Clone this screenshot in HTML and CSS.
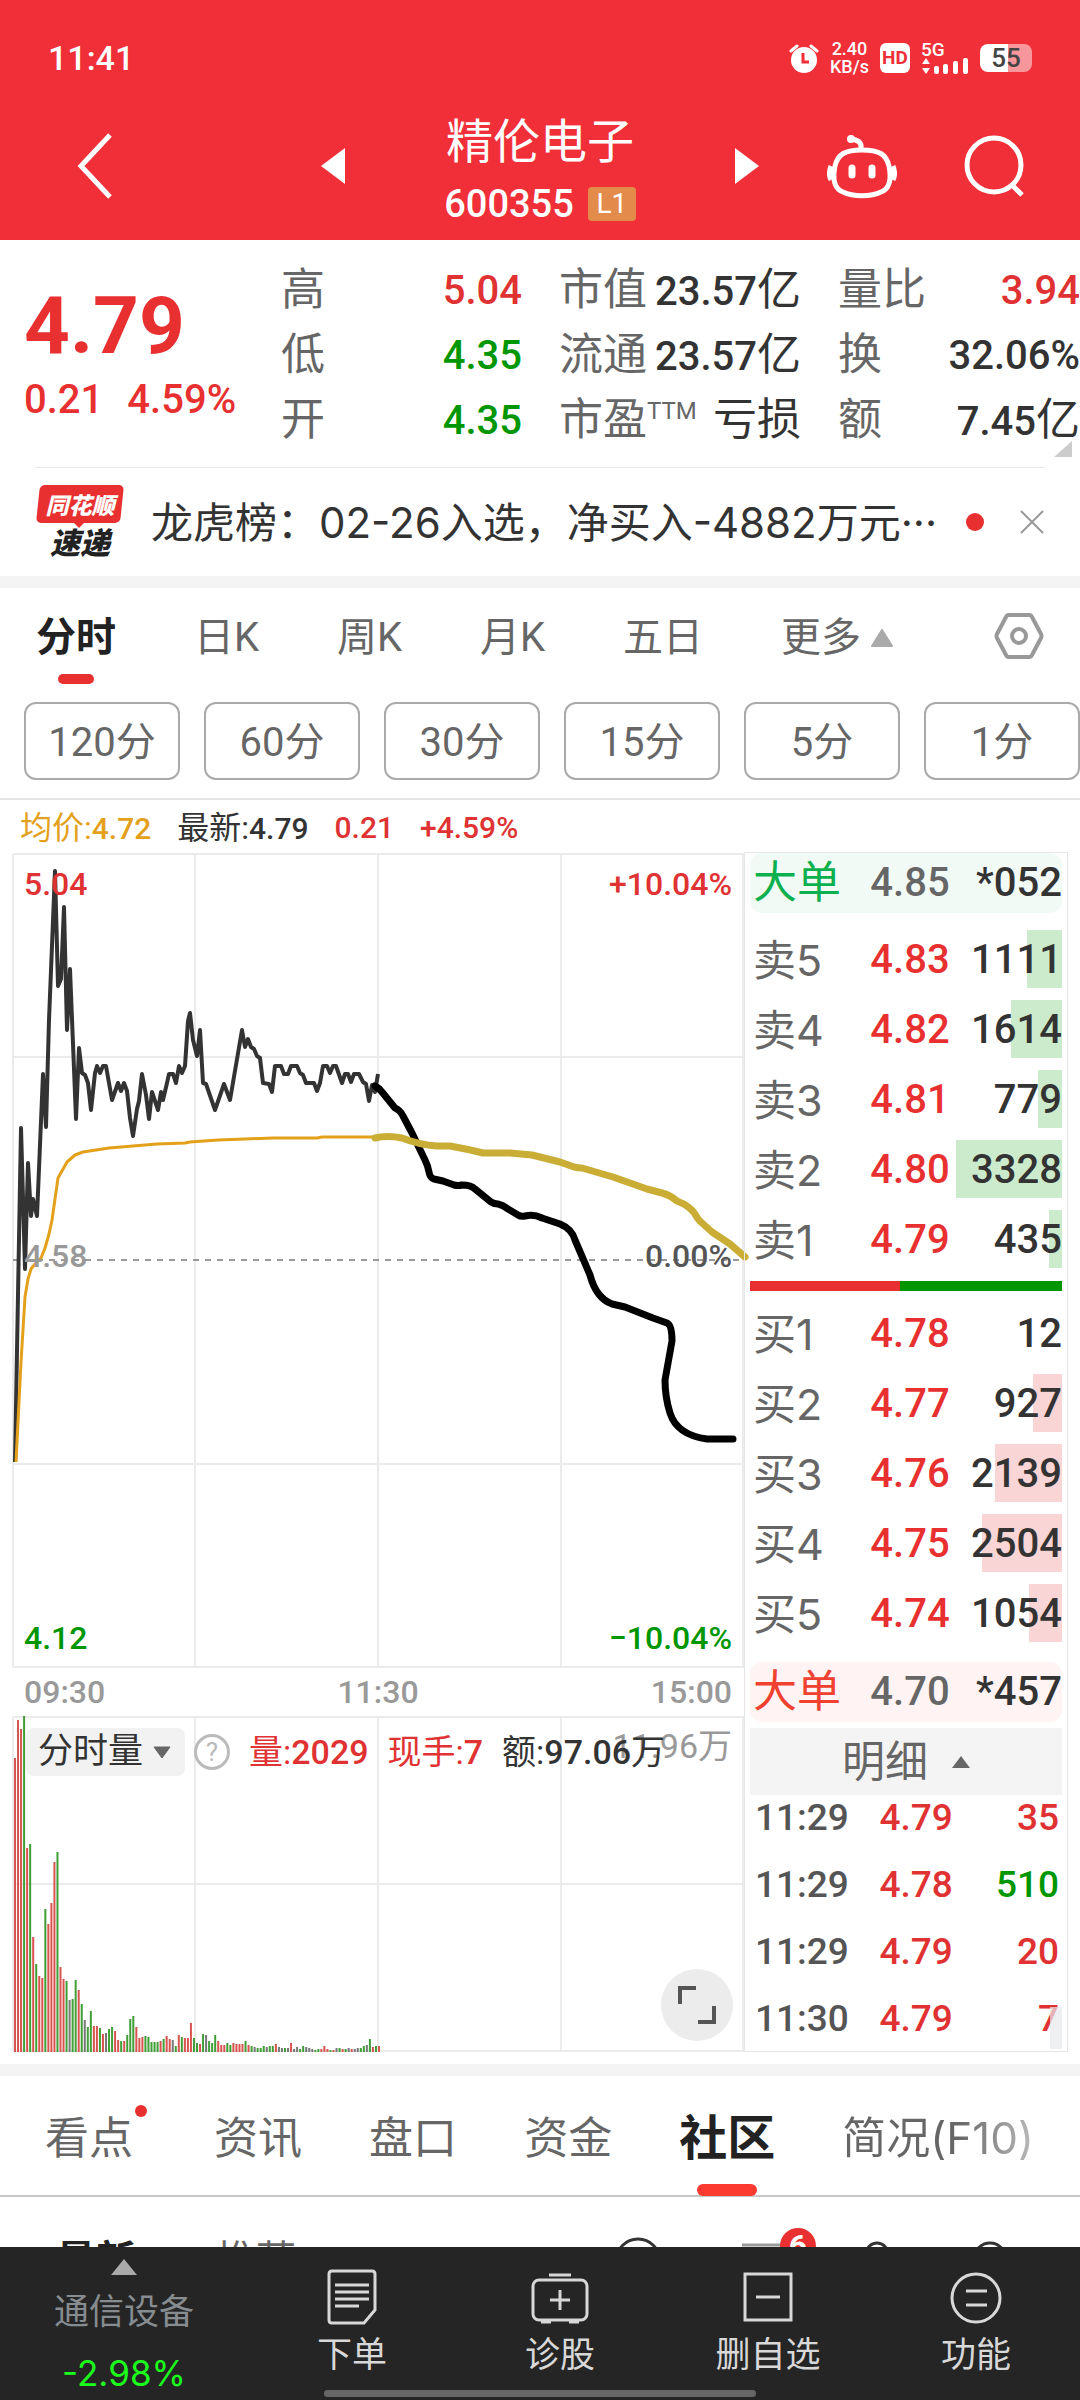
FILE: index.html
```html
<!DOCTYPE html>
<html lang="zh-CN">
  <head>
    <meta charset="UTF-8" />
    <meta name="viewport" content="width=device-width, initial-scale=1.0" />
    <title>精伦电子 600355</title>
    <link rel="stylesheet" href="styles.css">
  </head>
  <body>
    <header class="header">
      <div class="status">
        <span class="clock">11:41</span>
        <div class="status-icons">
          <svg width="30" height="30" viewBox="0 0 30 30">
            <circle cx="15" cy="17" r="13" fill="#fff" />
            <path d="M2 8 L8 3 M28 8 L22 3" stroke="#fff" stroke-width="3" stroke-linecap="round" />
            <path d="M14 10 V19 H20" fill="none" stroke="#f12f38" stroke-width="3" />
          </svg>
          <span class="speed"><span>2.40</span><span>KB/s</span></span>
          <span class="hd">HD</span>
          <div class="signal">
            <span>5G</span>
            <svg width="48" height="16" viewBox="0 0 48 16" fill="#fff">
              <path d="M1 6 L5 0 L9 6 Z M1 10 L5 16 L9 10 Z" />
              <rect x="13" y="8" width="5" height="8" rx="2" />
              <rect x="22" y="6" width="5" height="10" rx="2" />
              <rect x="32" y="3" width="5" height="13" rx="2" />
              <rect x="42" y="0" width="5" height="16" rx="2" />
            </svg>
          </div>
          <span class="battery">55</span>
        </div>
      </div>
      <nav class="nav">
        <div class="nav-left">
          <button class="icon-btn" aria-label="返回">
            <svg width="36" height="66" viewBox="0 0 36 66"><path d="M33 2 L4 33 L33 64" fill="none" stroke="#fff" stroke-width="5" /></svg>
          </button>
          <button class="icon-btn" aria-label="上一个">
            <svg width="24" height="36" viewBox="0 0 24 36"><path d="M24 0 L0 18 L24 36 Z" fill="#fff" /></svg>
          </button>
        </div>
        <div class="nav-title">
          <h1>精伦电子</h1>
          <div class="code">600355 <span class="level">L1</span></div>
        </div>
        <div class="nav-right">
          <button class="icon-btn" aria-label="下一个">
            <svg width="24" height="36" viewBox="0 0 24 36"><path d="M0 0 L24 18 L0 36 Z" fill="#fff" /></svg>
          </button>
          <button class="icon-btn" aria-label="智能助手">
            <svg width="70" height="66" viewBox="0 0 70 66" fill="none" stroke="#fff" stroke-width="5">
              <path d="M35 17 C52 17 59 21 62 33 C65 48 62 56 54 59 C44 64 26 64 16 59 C8 56 5 48 8 33 C11 21 18 17 35 17 Z" />
              <path d="M4 33 C2 38 2 43 4 47 M66 33 C68 38 68 43 66 47" />
              <path d="M34 16 C35 9 31 7 24 6" />
              <circle cx="24" cy="6" r="3" fill="#fff" stroke-width="2" />
              <path d="M25 35 V42 M45 35 V42" stroke-width="7" stroke-linecap="round" />
            </svg>
          </button>
          <button class="icon-btn" aria-label="搜索">
            <svg width="62" height="62" viewBox="0 0 62 62" fill="none" stroke="#fff" stroke-width="5">
              <circle cx="30" cy="30" r="27" />
              <path d="M48 50 L58 60" />
            </svg>
          </button>
        </div>
      </nav>
    </header>

    <section class="quote">
      <div class="price">
        <div class="price-now">4.79</div>
        <div class="price-diff"><span>0.21</span><span>4.59%</span></div>
      </div>
      <dl class="stats">
        <div><dt>高</dt><dd class="up">5.04</dd></div>
        <div><dt>低</dt><dd class="down">4.35</dd></div>
        <div><dt>开</dt><dd class="down">4.35</dd></div>
      </dl>
      <dl class="stats">
        <div><dt>市值</dt><dd>23.57<span>亿</span></dd></div>
        <div><dt>流通</dt><dd>23.57<span>亿</span></dd></div>
        <div><dt>市盈<sup>TTM</sup></dt><dd><span>亏损</span></dd></div>
      </dl>
      <dl class="stats stats-last">
        <div><dt>量比</dt><dd class="up">3.94</dd></div>
        <div><dt>换</dt><dd>32.06%</dd></div>
        <div><dt>额</dt><dd>7.45<span>亿</span></dd></div>
      </dl>
    </section>

    <section class="notice">
      <div class="notice-logo">
        <span class="logo-top">同花顺</span>
        <span class="logo-bottom">速递</span>
      </div>
      <a class="notice-text" href="#">龙虎榜：02-26入选，净买入-4882万元···</a>
      <span class="notice-dot"></span>
      <button class="icon-btn" aria-label="关闭">
        <svg width="24" height="24" viewBox="0 0 24 24"><path d="M1 1 L23 23 M23 1 L1 23" stroke="#999" stroke-width="2" /></svg>
      </button>
    </section>

    <section class="periods">
      <div class="period-row">
        <div class="period-tabs">
          <button class="active">分时</button>
          <button>日K</button>
          <button>周K</button>
          <button>月K</button>
          <button>五日</button>
          <button class="more">更多
            <svg width="24" height="20" viewBox="0 0 24 20"><path d="M12 2 L22 18 H2 Z" fill="#aaa" stroke="#aaa" stroke-width="2" stroke-linejoin="round" /></svg>
          </button>
        </div>
        <button class="icon-btn" aria-label="设置">
          <svg width="50" height="48" viewBox="0 0 50 48" fill="none" stroke="#999" stroke-width="4" stroke-linejoin="round">
            <path d="M14 3 H36 Q37 3 38 5 L47 22 Q48 24 47 26 L38 43 Q37 45 36 45 H14 Q13 45 12 43 L3 26 Q2 24 3 22 L12 5 Q13 3 14 3 Z" />
            <circle cx="25" cy="24" r="7" />
          </svg>
        </button>
      </div>
      <div class="minutes">
        <button>120分</button>
        <button>60分</button>
        <button>30分</button>
        <button>15分</button>
        <button>5分</button>
        <button>1分</button>
      </div>
    </section>

    <div class="chart-info">
      <span class="avg">均价:<b>4.72</b></span>
      <span>最新:<b>4.79</b></span>
      <b class="up">0.21</b>
      <b class="up">+4.59%</b>
    </div>

    <main class="trade">
      <div class="charts">
        <div class="price-chart">
          <svg viewBox="0 0 732 816" preserveAspectRatio="none" fill="none">
            <path d="M1 2 H732 M1 205 H732 M1 612 H732 M1 815 H732 M1 2 V815 M183 2 V815 M366 2 V815 M549 2 V815 M731 2 V815" stroke="#ebebeb" stroke-width="2" />
            <path d="M1 408 H732" stroke="#999" stroke-width="2" stroke-dasharray="6 6" />
            <polyline stroke="#333" stroke-width="4" stroke-linejoin="round" points="3,610 9,276 13,417 16,311 19,364 21,347 25,364 31,222 34,275 37,168 43,19 46,134 49,127 52,55 55,178 58,117 64,267 67,196 70,221 73,223 76,231 79,258 83,221 85,214 88,221 91,214 94,214 100,248 106,231 109,239 112,231 115,239 118,266 121,284 125,257 127,249 130,222 134,243 137,267 140,240 146,258 149,240 151,248 155,231 157,222 161,222 164,231 167,214 170,221 173,214 176,169 178,161 181,188 185,204 188,178 191,231 194,232 203,258 212,232 218,248 230,178 233,195 236,187 239,195 242,197 245,204 248,206 251,231 257,232 260,240 263,214 269,214 272,222 276,222 279,214 285,214 288,221 291,223 294,231 302,231 305,239 308,231 311,214 315,214 318,221 321,214 324,214 330,231 333,222 336,222 339,230 342,222 347,222 351,230 354,232 357,249 360,233 363,240 366,222" />
            <polyline stroke="#e3a01b" stroke-width="3" stroke-linejoin="round" points="4,610 9,510 13,445 16,427 19,417 23,412 29,406 33,396 37,382 40,368 43,347 46,326 55,310 63,303 71,300 97,296 121,294 145,292 173,291 178,290 206,288 233,287 261,286 305,286 310,285 365,285" />
            <path stroke="#000" stroke-width="7" stroke-linejoin="round" stroke-linecap="round" d="M363 234 Q367 236 370 240 L383 256 Q388 258 391 264 L400 281 L413 308 Q416 314 417 320 Q418 326 422 327 L431 329 L442 333 Q446 334 450 333 Q459 333 463 337 L479 350 Q482 352 486 352 Q491 353 496 357 L506 363 Q509 365 513 364 Q522 362 530 366 L548 372 Q560 377 563 388 L578 423 Q584 446 600 452 L613 455 L641 466 L655 471 Q660 473 660 489 L653 528 Q653 545 658 561 Q665 583 695 587 H721" />
            <path stroke="#c9ad35" stroke-width="7" stroke-linejoin="round" stroke-linecap="round" d="M363 286 Q375 283 390 286 Q408 293 425 294 H438 Q455 297 471 301 H498 L520 303 L548 310 L562 315 Q566 316 570 316 L601 325 L635 337 L650 341 Q658 343 665 349 Q678 354 683 362 Q686 368 690 371 L700 380 L718 392 L733 405" />
          </svg>
          <div class="scale scale-top up"><span>5.04</span><span>+10.04%</span></div>
          <div class="scale scale-mid"><span class="base">4.58</span><span>0.00%</span></div>
          <div class="scale scale-bottom down"><span>4.12</span><span>−10.04%</span></div>
        </div>
        <div class="times"><span>09:30</span><span>11:30</span><span>15:00</span></div>
        <div class="volume-chart">
          <svg viewBox="0 0 732 336" preserveAspectRatio="none">
            <path d="M1 1 H732 M1 168 H732 M1 335 H732 M1 1 V335 M183 1 V335 M366 1 V335 M549 1 V335 M731 1 V335" stroke="#ebebeb" stroke-width="2" />
            <g id="bars"></g>
          </svg>
          <span class="volume-max">11.96万</span>
          <div class="volume-bar">
            <button class="indicator">分时量
              <svg width="18" height="13" viewBox="0 0 18 13"><path d="M1 1 H17 L9 12 Z" fill="#666" stroke="#666" stroke-linejoin="round" /></svg>
            </button>
            <button class="help" aria-label="说明">?</button>
            <span class="up">量:<b>2029</b></span>
            <span class="up">现手:<b>7</b></span>
            <span>额:<b>97.06</b>万</span>
          </div>
          <button class="expand" aria-label="全屏">
            <svg width="38" height="38" viewBox="0 0 38 38" fill="none" stroke="#555" stroke-width="4"><path d="M2 18 V2 H18 M36 20 V36 H20" /></svg>
          </button>
        </div>
      </div>

      <aside class="book">
        <div class="big-order sell"><span>大单</span><b>4.85</b><b>*052</b></div>
        <table class="levels sell">
          <tr><th>卖5</th><td>4.83</td><td><i style="width: 31%"></i><b>1111</b></td></tr>
          <tr><th>卖4</th><td>4.82</td><td><i style="width: 45%"></i><b>1614</b></td></tr>
          <tr><th>卖3</th><td>4.81</td><td><i style="width: 21%"></i><b>779</b></td></tr>
          <tr><th>卖2</th><td>4.80</td><td><i style="width: 94%"></i><b>3328</b></td></tr>
          <tr><th>卖1</th><td>4.79</td><td><i style="width: 12%"></i><b>435</b></td></tr>
        </table>
        <div class="ratio"><i style="width: 48%"></i></div>
        <table class="levels buy">
          <tr><th>买1</th><td>4.78</td><td><b>12</b></td></tr>
          <tr><th>买2</th><td>4.77</td><td><i style="width: 26%"></i><b>927</b></td></tr>
          <tr><th>买3</th><td>4.76</td><td><i style="width: 60%"></i><b>2139</b></td></tr>
          <tr><th>买4</th><td>4.75</td><td><i style="width: 71%"></i><b>2504</b></td></tr>
          <tr><th>买5</th><td>4.74</td><td><i style="width: 29%"></i><b>1054</b></td></tr>
        </table>
        <div class="big-order buy"><span>大单</span><b>4.70</b><b>*457</b></div>
        <button class="detail-btn">明细
          <svg width="18" height="12" viewBox="0 0 18 12"><path d="M9 0 L18 12 H0 Z" fill="#666" /></svg>
        </button>
        <table class="ticks">
          <tr><td>11:29</td><td class="up">4.79</td><td class="up">35</td></tr>
          <tr><td>11:29</td><td class="up">4.78</td><td class="down">510</td></tr>
          <tr><td>11:29</td><td class="up">4.79</td><td class="up">20</td></tr>
          <tr><td>11:30</td><td class="up">4.79</td><td class="up">7</td></tr>
        </table>
        <span class="scroll-thumb"></span>
      </aside>
    </main>

    <nav class="sections">
      <a href="#" class="has-dot">看点</a>
      <a href="#">资讯</a>
      <a href="#">盘口</a>
      <a href="#">资金</a>
      <a href="#" class="active">社区</a>
      <a href="#" class="fade">简况(F10)</a>
    </nav>

    <section class="community">
      <div class="feed-tabs"><a href="#" class="active">最新</a><a href="#">推荐</a></div>
      <div class="feed-icons">
        <svg width="48" height="48" viewBox="0 0 48 48"><circle cx="24" cy="24" r="22" /></svg>
        <div class="messages">
          <svg width="40" height="30" viewBox="0 0 40 30"><path d="M0 2 H40" stroke="#999" /></svg>
          <span>6</span>
        </div>
        <svg class="small" width="30" height="34" viewBox="0 0 30 34"><circle cx="15" cy="13" r="11" /></svg>
        <svg class="small" width="36" height="34" viewBox="0 0 36 34"><circle cx="18" cy="18" r="16" /></svg>
      </div>
    </section>

    <footer class="toolbar">
      <button class="sector">
        <svg width="26" height="16" viewBox="0 0 26 16"><path d="M13 0 L26 16 H0 Z" fill="#aaa" /></svg>
        <span>通信设备</span>
        <span class="sector-change">-2.98%</span>
      </button>
      <button>
        <svg width="58" height="56" viewBox="0 0 58 56">
          <path d="M9 2 H49 Q52 2 52 5 V41 L41 54 H9 Q6 54 6 51 V5 Q6 2 9 2 Z" />
          <path d="M12 16 H46 M12 23 H46 M12 30 H46 M12 37 H36" />
        </svg>
        下单
      </button>
      <button>
        <svg width="58" height="56" viewBox="0 0 58 56">
          <rect x="2" y="11" width="54" height="40" rx="6" />
          <path d="M18 6 H40 M29 21 V41 M19 31 H39 M10 53 H20 M38 53 H48" />
        </svg>
        诊股
      </button>
      <button>
        <svg width="58" height="56" viewBox="0 0 58 56">
          <rect x="6" y="5" width="46" height="46" />
          <path d="M17 28 H41" />
        </svg>
        删自选
      </button>
      <button>
        <svg width="58" height="56" viewBox="0 0 58 56">
          <circle cx="29" cy="29" r="24" />
          <path d="M19 22 H40 M19 36 H40" />
        </svg>
        功能
      </button>
      <span class="home-bar"></span>
    </footer>

    <script>
      // 每分钟成交量: r 涨, g 跌, k 平
      const volumes =
        "r294 r332 r323 g336 r204 g208 r115 g88 r76 r74 g143 r128 r149 r190 g200 r85 r73 g71 k52 g53 " +
        "g72 r62 g48 k32 g25 g41 r26 r26 g24 r18 k19 g23 g25 r21 r12 g11 r11 g17 g33 g36 " +
        "r25 r14 r15 g16 g15 g10 g10 g10 r11 g13 r16 r13 k12 g6 r17 g15 r14 r14 r29 g14 " +
        "g9 r8 g18 k17 g11 g9 g17 r11 r7 r7 g9 g7 r9 r8 r8 r8 g11 r7 g6 k5 " +
        "g4 g4 g6 k5 g6 g6 r8 k5 k4 g4 k4 r9 k3 k5 g3 g6 k5 k4 k3 g2 " +
        "g3 r3 r6 r3 g2 r2 k4 g4 r3 g3 k4 r3 k3 k4 g4 g6 k7 g13 r5 g6 r6";
      const colors = { r: "#d9534f", g: "#3f9e35", k: "#777" };
      const bars = document.getElementById("bars");

      volumes.split(" ").forEach((item, i) => {
        const height = Number(item.slice(1));
        const bar = document.createElementNS("http://www.w3.org/2000/svg", "rect");
        bar.setAttribute("x", 2 + (i * 364) / 120);
        bar.setAttribute("y", 336 - height);
        bar.setAttribute("width", 2);
        bar.setAttribute("height", height);
        bar.setAttribute("fill", colors[item[0]]);
        bars.appendChild(bar);
      });
    </script>
  </body>
</html>
```

FILE: styles.css
```css
* {
  box-sizing: border-box;
}
body {
  margin: 0;
  background: #fff;
  color: #333;
  font-family: Roboto, "Noto Sans CJK SC", sans-serif;
  font-size: 40px;
  line-height: 44px;
}
button {
  font: inherit;
  color: inherit;
  background: none;
  border: none;
  padding: 0;
  white-space: nowrap;
}
a {
  color: inherit;
  text-decoration: none;
}
b {
  font-weight: 500;
}
svg {
  display: block;
}
.up {
  color: #e03232;
}
.down {
  color: #009600;
}

/* header */
.header {
  background: #f12f38;
  color: #fff;
}
.status {
  display: flex;
  justify-content: space-between;
  align-items: center;
  height: 92px;
  padding: 24px 48px 0;
}
.clock {
  font-size: 34px;
  font-weight: 500;
}
.status-icons {
  display: flex;
  align-items: center;
  gap: 11px;
}
.speed {
  display: grid;
  font-size: 18px;
  font-weight: 500;
  line-height: 18px;
  text-align: center;
}
.hd {
  width: 30px;
  border-radius: 6px;
  background: #fff;
  color: #f12f38;
  font-size: 19px;
  font-weight: 700;
  line-height: 30px;
  text-align: center;
}
.signal {
  font-size: 19px;
  font-weight: 500;
  line-height: 16px;
}
.battery {
  width: 52px;
  border-radius: 8px;
  background: linear-gradient(90deg, #fff 54%, #f8979b 54%);
  color: #444;
  font-size: 26px;
  font-weight: 500;
  line-height: 28px;
  text-align: center;
}
.nav {
  display: grid;
  grid-template-columns: 345fr 390fr 345fr;
  align-items: center;
  height: 148px;
}
.nav-left,
.nav-right {
  display: flex;
  align-items: center;
  justify-content: space-between;
}
.nav-left {
  padding-left: 77px;
}
.nav-right {
  padding-right: 54px;
}
.nav-title {
  padding-top: 6px;
  text-align: center;
}
.nav-title h1 {
  margin: 0 0 10px;
  font-size: 47px;
  font-weight: 400;
  line-height: 60px;
}
.code {
  display: flex;
  justify-content: center;
  align-items: center;
  gap: 14px;
  font-size: 38px;
  font-weight: 500;
}
.level {
  width: 48px;
  border-radius: 4px;
  background: #e28b4a;
  font-size: 28px;
  font-weight: 400;
  line-height: 34px;
}

/* quote */
.quote {
  display: grid;
  grid-template-columns: 281fr 278fr 279fr 242fr;
  padding: 18px 0 14px;
}
.price {
  padding: 28px 0 0 24px;
  color: #e83030;
}
.price-now {
  font-size: 80px;
  font-weight: 700;
  line-height: 80px;
}
.price-diff {
  display: flex;
  gap: 24px;
  margin-top: 12px;
  font-weight: 500;
}
.stats {
  margin: 0;
  padding-right: 37px;
}
.stats div {
  display: flex;
  justify-content: space-between;
  height: 65px;
  line-height: 65px;
  white-space: nowrap;
}
.stats dt {
  color: #666;
  font-size: 44px;
}
.stats sup {
  font-size: 24px;
  line-height: 24px;
}
.stats dd {
  margin: 0;
  font-weight: 500;
}
.stats dd span {
  font-size: 44px;
  font-weight: 400;
}
.stats-last {
  position: relative;
  padding-right: 0;
}
.stats-last::after {
  content: "";
  position: absolute;
  right: 8px;
  bottom: -4px;
  border-left: 18px solid transparent;
  border-bottom: 16px solid #ccc;
}

/* notice */
.notice {
  display: flex;
  align-items: center;
  margin: 0 36px;
  height: 109px;
  border-top: 1px solid #e8e8e8;
}
.notice-logo {
  flex: none;
  width: 88px;
  font-family: "Noto Sans CJK SC", sans-serif;
  font-style: italic;
  font-weight: 900;
  text-align: center;
}
.logo-top {
  position: relative;
  z-index: 0;
  display: block;
  color: #fff;
  font-size: 23px;
  line-height: 38px;
}
.logo-top::before {
  content: "";
  position: absolute;
  z-index: -1;
  inset: 0 2px;
  border-radius: 5px;
  background: #e83030;
  transform: skewX(-6deg);
}
.logo-top::after {
  content: "";
  position: absolute;
  left: 38px;
  bottom: -5px;
  border: 5px solid transparent;
  border-top-color: #e83030;
  border-bottom: none;
}
.logo-bottom {
  display: block;
  color: #222;
  font-size: 30px;
  line-height: 36px;
}
.notice-text {
  flex: 1;
  margin-left: 27px;
  padding-top: 2px;
  font-family: Inter, "Noto Sans CJK SC", sans-serif;
  font-size: 42px;
  white-space: nowrap;
}
.notice-dot {
  width: 18px;
  height: 18px;
  margin-right: 36px;
  border-radius: 50%;
  background: #e83030;
}

/* period tabs */
.periods {
  border-top: 12px solid #f4f4f4;
  border-bottom: 2px solid #e6e6e6;
  padding-bottom: 18px;
}
.period-row {
  display: flex;
  align-items: center;
  height: 96px;
  padding: 0 36px;
}
.period-tabs {
  flex: 1;
  display: flex;
  justify-content: space-between;
  margin-right: 100px;
  color: #666;
}
.period-tabs button {
  position: relative;
  height: 96px;
  padding-top: 4px;
}
.period-tabs .active {
  color: #222;
  font-weight: 700;
}
.period-tabs .active::after {
  content: "";
  position: absolute;
  left: 22px;
  right: 22px;
  bottom: 0;
  height: 10px;
  border-radius: 5px;
  background: #e83030;
}
.more {
  display: flex;
  align-items: center;
  gap: 9px;
}
.minutes {
  display: flex;
  gap: 24px;
  margin-top: 18px;
  padding-left: 24px;
}
.minutes button {
  flex: 1;
  height: 78px;
  padding-top: 4px;
  border: 2px solid #aaa;
  border-radius: 12px;
  color: #666;
  font-size: 40px;
}

/* chart info line */
.chart-info {
  display: flex;
  align-items: center;
  gap: 26px;
  height: 52px;
  padding: 4px 20px 0;
  font-size: 32px;
}
.chart-info b {
  font-size: 30px;
}
.chart-info .avg {
  color: #e3a01b;
}

/* charts */
.trade {
  display: grid;
  grid-template-columns: 732fr 324fr;
  padding: 0 12px 12px;
}
.charts svg {
  overflow: visible;
}
.price-chart,
.volume-chart {
  position: relative;
}
.price-chart > svg {
  width: 100%;
  height: 816px;
}
.scale {
  position: absolute;
  left: 12px;
  right: 12px;
  display: flex;
  justify-content: space-between;
  font-size: 32px;
  font-weight: 500;
}
.scale-top {
  top: 10px;
}
.scale-mid {
  top: 382px;
  color: #555;
}
.base {
  color: #999;
}
.scale-bottom {
  bottom: 8px;
}
.times {
  display: flex;
  justify-content: space-between;
  padding: 2px 12px;
  color: #999;
  font-size: 32px;
  font-weight: 500;
}
.volume-chart {
  font-size: 34px;
}
.volume-chart > svg {
  width: 100%;
  height: 336px;
}
.volume-max {
  position: absolute;
  top: 8px;
  right: 12px;
  color: #999;
}
.volume-bar {
  position: absolute;
  top: 12px;
  left: 14px;
  display: flex;
  align-items: center;
  gap: 19px;
  white-space: nowrap;
}
.indicator {
  display: flex;
  align-items: center;
  gap: 10px;
  height: 48px;
  padding: 0 14px 0 12px;
  margin-right: -10px;
  border-radius: 8px;
  background: #f2f2f2;
  font-size: 35px;
}
.help {
  width: 36px;
  height: 36px;
  border: 3px solid #bbb;
  border-radius: 50%;
  color: #bbb;
  font-size: 26px;
  line-height: 30px;
}
.expand {
  position: absolute;
  right: 11px;
  bottom: 11px;
  display: grid;
  place-items: center;
  width: 72px;
  height: 72px;
  border-radius: 50%;
  background: #ececec;
}

/* order book */
.book {
  position: relative;
  padding: 0 5px;
  border: 1px solid #e6e6e6;
  height: 1200px;
  overflow: hidden;
}
.big-order {
  display: grid;
  grid-template-columns: 38% 26% 36%;
  height: 60px;
  border-radius: 12px;
  line-height: 60px;
}
.big-order span {
  padding-left: 3px;
  font-size: 44px;
}
.big-order b {
  color: #666;
  text-align: right;
}
.big-order b:last-child {
  color: #333;
}
.big-order.sell {
  margin-bottom: 11px;
  background: #f2faf6;
}
.big-order.sell span {
  color: #0cb04e;
}
.big-order.buy {
  margin: 14px 0 6px;
  background: #fff3f3;
}
.big-order.buy span {
  color: #f0402f;
}
.levels,
.ticks {
  width: 100%;
  table-layout: fixed;
  border-collapse: collapse;
}
.levels th,
.levels td {
  position: relative;
  height: 70px;
  padding: 2px 0 0;
  text-align: right;
  font-weight: 500;
}
.levels th {
  width: 38%;
  padding-left: 3px;
  color: #666;
  font-family: Inter, "Noto Sans CJK SC", sans-serif;
  font-size: 43px;
  font-weight: 400;
  text-align: left;
}
.levels td {
  width: 26%;
  color: #e83030;
}
.levels td:last-child {
  width: 36%;
  color: #333;
}
.levels i {
  position: absolute;
  top: 6px;
  right: 0;
  bottom: 6px;
  background: #ccebcc;
}
.levels.buy i {
  background: #fad5d5;
}
.levels b {
  position: relative;
}
.ratio {
  height: 10px;
  margin: 7px 0;
  background: #009600;
}
.ratio i {
  display: block;
  height: 10px;
  background: #e83030;
}
.detail-btn {
  display: flex;
  justify-content: center;
  align-items: center;
  gap: 24px;
  width: 100%;
  height: 67px;
  background: #f4f4f4;
  color: #666;
  font-size: 43px;
}
.ticks td {
  height: 67px;
  padding: 1px 0 22px;
  font-size: 37px;
  font-weight: 500;
  text-align: right;
}
.ticks td:first-child {
  width: 36%;
  padding-left: 5px;
  color: #555;
  text-align: left;
}
.ticks td:nth-child(2) {
  width: 29%;
}
.ticks td:last-child {
  padding-right: 3px;
}
.scroll-thumb {
  position: absolute;
  right: 5px;
  bottom: 2px;
  width: 12px;
  height: 42px;
  background: rgba(230, 232, 235, 0.7);
}

/* lower sections */
.sections {
  display: flex;
  justify-content: space-between;
  align-items: center;
  height: 133px;
  padding: 0 46px 0 45px;
  border-top: 12px solid #f4f4f4;
  border-bottom: 2px solid #c8c8c8;
  color: #666;
  font-family: Inter, "Noto Sans CJK SC", sans-serif;
  font-size: 44px;
}
.sections a {
  position: relative;
  padding-top: 4px;
  line-height: 116px;
}
.sections .has-dot {
  padding-right: 14px;
}
.has-dot::after {
  content: "";
  position: absolute;
  top: 29px;
  right: 0;
  width: 12px;
  height: 12px;
  border-radius: 50%;
  background: #e83030;
}
.sections .active {
  color: #222;
  font-size: 48px;
  font-weight: 700;
}
.sections .active::after {
  content: "";
  position: absolute;
  left: 18px;
  right: 18px;
  bottom: 0;
  height: 12px;
  border-radius: 6px;
  background: #fd3a2f;
}
.sections .fade {
  background: linear-gradient(90deg, #666 60%, #bbb);
  background-clip: text;
  color: transparent;
}
.community {
  display: flex;
  justify-content: space-between;
  padding: 40px 72px 0 56px;
}
.feed-tabs {
  display: flex;
  gap: 80px;
  padding-top: 2px;
  color: #666;
}
.feed-tabs .active {
  color: #222;
  font-weight: 700;
}
.feed-icons {
  display: flex;
  align-items: flex-start;
  justify-content: space-between;
  width: 394px;
}
.feed-icons svg {
  fill: none;
  stroke: #333;
  stroke-width: 3;
}
.feed-icons .small {
  margin-top: 4px;
}
.messages {
  position: relative;
  padding-top: 6px;
}
.messages span {
  position: absolute;
  top: -9px;
  right: -34px;
  width: 36px;
  border-radius: 18px;
  background: #e83030;
  color: #fff;
  font-size: 32px;
  font-weight: 700;
  line-height: 36px;
  text-align: center;
}

/* bottom toolbar */
.toolbar {
  position: fixed;
  left: 0;
  right: 0;
  bottom: 0;
  display: grid;
  grid-template-columns: 248fr 208fr 208fr 208fr 208fr;
  height: 153px;
  background: #252525;
  color: #d8d8d8;
  font-size: 35px;
}
.toolbar button {
  display: flex;
  flex-direction: column;
  align-items: center;
  gap: 9px;
  padding-top: 22px;
}
.toolbar button > svg {
  fill: none;
  stroke: #d8d8d8;
  stroke-width: 3;
}
.toolbar .sector {
  gap: 16px;
  padding-top: 12px;
  color: #868c90;
}
.toolbar .sector > svg {
  stroke: none;
}
.sector-change {
  color: #1bff1b;
  font-family: Inter, sans-serif;
  font-size: 35px;
}
.home-bar {
  position: absolute;
  left: 30%;
  right: 30%;
  bottom: 3px;
  height: 7px;
  border-radius: 4px;
  background: #666;
}
```
